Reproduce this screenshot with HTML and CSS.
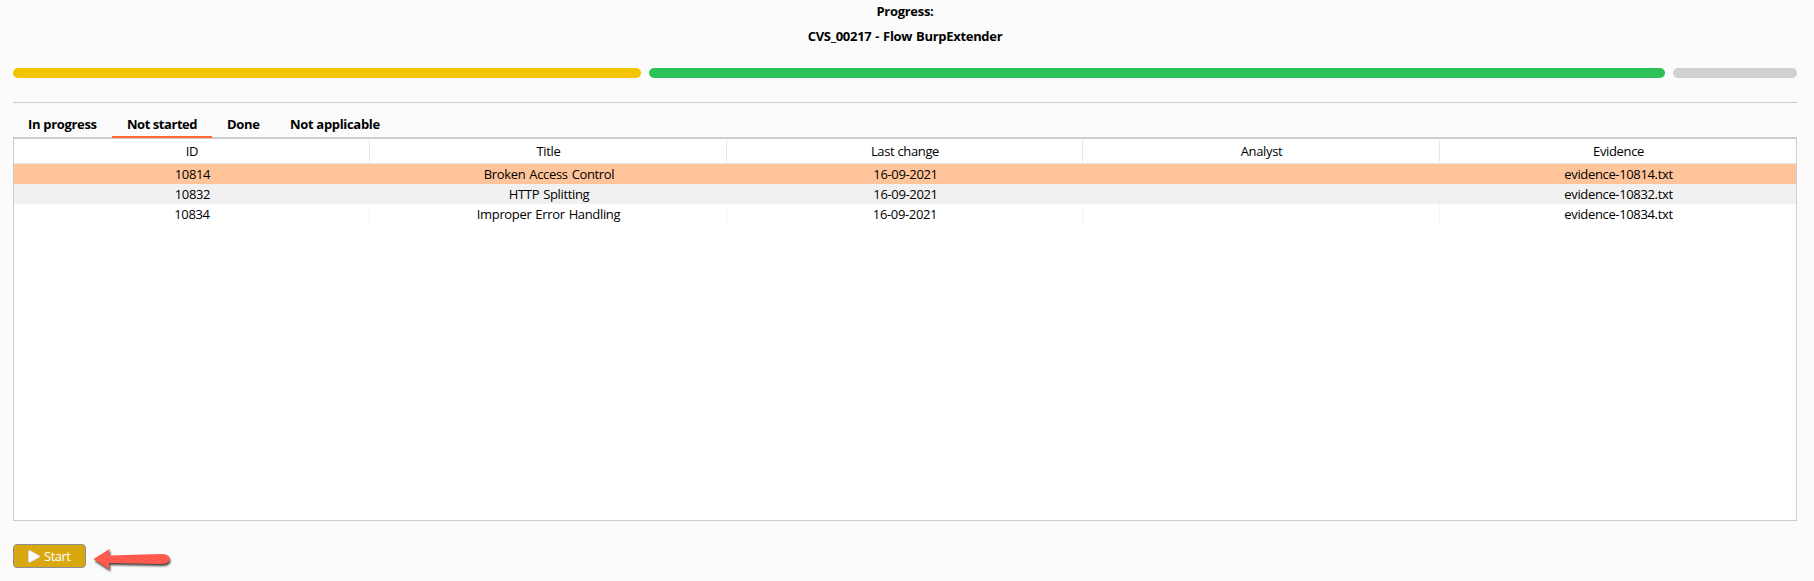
FILE: index.html
```html
<!DOCTYPE html>
<html lang="en">
<head>
<meta charset="utf-8">
<title>Flow BurpExtender</title>
<link rel="stylesheet" href="styles.css">
</head>
<body>
<main class="panel">
  <header class="heading">
    <div><span class="t-progress">Progress:</span></div>
    <div><span class="t-project">CVS_00217 - Flow BurpExtender</span></div>
  </header>
  <div class="progress">
    <div class="bar bar-yellow"></div>
    <div class="bar bar-green"></div>
    <div class="bar bar-gray"></div>
  </div>
  <nav class="tabs">
    <div class="tab tab-progress"><span>In progress</span></div>
    <div class="tab tab-active"><span>Not started</span></div>
    <div class="tab tab-done"><span>Done</span></div>
    <div class="tab tab-na"><span>Not applicable</span></div>
  </nav>
  <section class="table">
    <div class="row head"><div><span>ID</span></div><div><span>Title</span></div><div><span>Last change</span></div><div><span>Analyst</span></div><div><span>Evidence</span></div></div>
    <div class="row selected"><div><span>10814</span></div><div><span class="title">Broken Access Control</span></div><div><span>16-09-2021</span></div><div></div><div><span>evidence-10814.txt</span></div></div>
    <div class="row striped"><div><span>10832</span></div><div><span class="title">HTTP Splitting</span></div><div><span>16-09-2021</span></div><div></div><div><span>evidence-10832.txt</span></div></div>
    <div class="row plain"><div><span>10834</span></div><div><span class="title">Improper Error Handling</span></div><div><span>16-09-2021</span></div><div></div><div><span>evidence-10834.txt</span></div></div>
  </section>
  <footer class="actions">
    <button class="start" type="button">
      <svg width="12" height="13" viewBox="0 0 12 13"><path d="M.5 .8H2.5L11.5 6V7L2.5 12H.5Z" fill="#fff" stroke="#d9d9d9" stroke-width="1"/></svg>
      <span>Start</span>
    </button>
    <svg class="arrow" width="86" height="30" viewBox="0 0 86 30">
      <path d="M1.5 15 17.5 5 17 11.5 69 10Q77.5 10 77.5 15T69 20L17 19 17.5 25.5Z" fill="#ff5a4d"/>
    </svg>
  </footer>
</main>
</body>
</html>
```
FILE: styles.css
```css
* { box-sizing: border-box; }
body {
  margin: 0;
  background: #fbfbfb;
  color: #000;
  font: 13px/20px "Open Sans", "Noto Sans", sans-serif;
}
.panel { height: 581px; padding: 0 17px 0 13px; overflow: hidden; }
.heading {
  height: 68px;
  padding-top: 1px;
  text-align: center;
  font-weight: 700;
  line-height: 25px;
}
.heading div { height: 25px; margin-top: -2px; }
.heading div + div { margin-top: 0; }
.heading span { letter-spacing: -0.3px; }
.heading .t-project { word-spacing: 0.8px; }
.progress {
  display: flex;
  gap: 8px;
  height: 35px;
  border-bottom: 1px solid #cdcdcd;
}
.bar { height: 10px; border-radius: 5px; }
.bar-yellow { width: 628px; background: #f2c500; }
.bar-green { width: 1016px; background: #2dc258; }
.bar-gray { width: 124px; background: #d0d0d0; }
.tabs { display: flex; height: 34px; padding-top: 9px; }
.tab {
  height: 26px;
  padding: 2px 0 0 15px;
  font-weight: 700;
  letter-spacing: -0.32px;
  white-space: nowrap;
}
.tab-progress { width: 99px; }
.tab-active { position: relative; width: 100px; border-bottom: 2px solid #ff6633; letter-spacing: -0.45px; }
.tab-done { width: 63px; }
.tab-na { width: 120px; }
.table {
  height: 384px;
  border: 1px solid #cdcdcd;
  border-top-width: 2px;
  background: #fff;
  letter-spacing: -0.35px;
}
.title { word-spacing: 1px; }
.row {
  display: grid;
  grid-template-columns: 356px 357px 356px 357px 356px;
  height: 20px;
  text-align: center;
}
.row > div { padding-left: 1px; white-space: nowrap; }
.head { height: 25px; padding: 1px 0; border-bottom: 1px solid #e6e6e6; line-height: 23px; }
.head > div { height: 22px; }
.head > div:not(:last-child) { border-right: 1px solid #e6e6e6; }
.selected { background: #ffc499; }
.striped { background: #f1f1f1; }
.plain > div:not(:last-child) { border-right: 1px solid #f5f5f5; }
.actions { display: flex; padding-top: 23px; }
.start {
  display: flex;
  align-items: center;
  gap: 4px;
  width: 73px;
  height: 24px;
  padding: 0 0 0 14px;
  border: 1px solid #8f8f91;
  border-radius: 4px;
  background: #d9a80f;
  color: #fff;
  font: inherit;
  letter-spacing: -0.5px;
}
.arrow { margin-left: 6px; overflow: visible; filter: drop-shadow(1.5px 2px 1px rgba(0, 0, 0, 0.75)); }
```
